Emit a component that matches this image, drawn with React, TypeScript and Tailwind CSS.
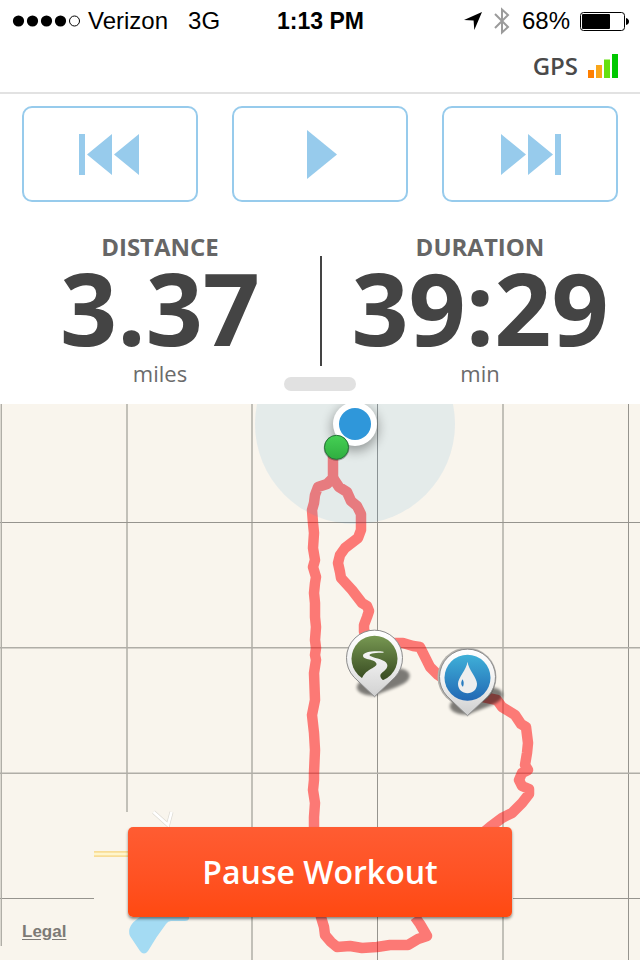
import { ReactNode, useState } from "react";

const SANS = "font-['Open_Sans','Noto_Sans',sans-serif]";
const SYSTEM = "font-['Liberation_Sans',Arial,sans-serif]";

const OUTBOUND =
  "M333 456 L333 468 L333 478 L327 484 L318 487 L315 495 L314 503 L312 510 L313 523 L314 533 L313 548 L315 560 L313 567 L316 577 L315 583 L314 593 L315 603 L315 617 L316 627 L315 640 L316 648 L315 655 L316 660 L314 673 L315 700 L312 715 L314 733 L315 750 L314 773 L314 780 L313 790 L315 803 L314 817 L314 830 L318 900 L321 917 L324 927 L325 935 L331 942 L337 947 L350 946 L362 948 L377 947 L390 945 L408 945 L418 939 L427 936 L420 924 L415 917";
const RETURN =
  "M333 478 L339 487 L347 492 L351 501 L357 506 L361 514 L361 530 L358 538 L345 548 L340 555 L338 563 L340 572 L341 578 L352 590 L362 603 L367 606 L369 611 L367 617 L364 625 L364 632 L380 643 L403 643 L413 646 L420 647 L424 655 L430 667 L438 675 L460 690 L483 697 L497 700 L502 707 L515 715 L521 724 L526 727 L528 743 L527 753 L525 765 L528 770 L522 773 L519 780 L522 786 L529 789 L529 794 L522 803 L512 813 L502 818 L490 827 L484 832";

const STATS = [
  { label: "DISTANCE", value: "3.37", unit: "miles" },
  { label: "DURATION", value: "39:29", unit: "min" },
];

function StatusBar() {
  return (
    <header className={`flex h-10 items-center pt-[2px] text-2xl text-black ${SYSTEM}`}>
      <div className="flex flex-1 items-center pl-3">
        <svg width="69" height="12" viewBox="0 0 69 12" className="mr-[7px]" aria-hidden="true">
          {[6.5, 20.5, 34.5, 48.5].map((x) => (
            <circle key={x} cx={x} cy="6" r="5.6" />
          ))}
          <circle cx="62.5" cy="6" r="5" fill="none" stroke="#000" />
        </svg>
        <span>Verizon</span>
        <span className="ml-5">3G</span>
      </div>
      <span className="text-[23px] font-bold">1:13 PM</span>
      <div className="flex flex-1 items-center justify-end pr-[11px]">
        <svg width="18" height="18" viewBox="0 0 18 18" className="mr-3" aria-hidden="true">
          <path d="M0 8 L18 0 L10.3 18 L9.6 8.6 Z" />
        </svg>
        <svg width="16" height="28" viewBox="0 0 16 28" className="mr-3" aria-hidden="true">
          <path d="M1 7 L14 20 L8 25.5 V2.5 L14 8 L1 21" fill="none" stroke="#9b9b9b" strokeWidth="2" />
        </svg>
        <span className="mr-[10px]">68%</span>
        <svg width="49" height="19" viewBox="0 0 49 19" aria-hidden="true">
          <rect x="0.5" y="0.5" width="44" height="18" rx="3" fill="none" stroke="#000" />
          <rect x="2" y="2" width="28" height="15" rx="1" />
          <path d="M46 6 Q49 7 49 9.5 Q49 12 46 13 Z" />
        </svg>
      </div>
    </header>
  );
}

function GpsBar() {
  return (
    <div className="flex h-[54px] items-center justify-end gap-[10px] border-b-2 border-[#e2e2e2] pr-[22px]">
      <span className="text-2xl font-semibold text-[#4a4a4a]">GPS</span>
      <svg width="30" height="24" viewBox="0 0 30 24" aria-hidden="true">
        <rect x="0" y="16" width="6" height="8" fill="#ff7f00" />
        <rect x="8" y="11" width="6" height="13" fill="#f9a61a" />
        <rect x="16" y="5.5" width="6" height="18.5" fill="#66e010" />
        <rect x="24" y="0" width="6" height="24" fill="#00c800" />
      </svg>
    </div>
  );
}

function MediaButton({ label, children }: { label: string; children: ReactNode }) {
  return (
    <button
      type="button"
      aria-label={label}
      className="flex h-24 items-center justify-center rounded-[10px] border-2 border-[#97cbec] bg-white text-[#97cbec]"
    >
      {children}
    </button>
  );
}

function MediaControls() {
  return (
    <div className="grid grid-cols-3 gap-[34px] px-[22px] pt-3">
      <MediaButton label="Previous">
        <svg width="62" height="42" viewBox="0 0 62 42" fill="currentColor">
          <path d="M0 1 H6 V42 H0 Z M8 21.5 L33 1 V42 Z M35 21.5 L60 1 V42 Z" />
        </svg>
      </MediaButton>
      <MediaButton label="Play">
        <svg width="34" height="50" viewBox="0 0 34 50" fill="currentColor">
          <path d="M4 1 L34 25.5 L4 50 Z" />
        </svg>
      </MediaButton>
      <MediaButton label="Next">
        <svg width="62" height="42" viewBox="0 0 62 42" fill="currentColor">
          <path d="M2 1 L27 21.5 L2 42 Z M29 1 L54 21.5 L29 42 Z M56 1 H62 V42 H56 Z" />
        </svg>
      </MediaButton>
    </div>
  );
}

function Stats() {
  return (
    <section className="relative flex h-[202px] pt-[30px]">
      {STATS.map((stat) => (
        <div key={stat.label} className="flex flex-1 flex-col items-center">
          <span className="text-2xl leading-[30px] font-bold text-[#666]">{stat.label}</span>
          <span className="text-[100px] leading-[90px] font-bold text-[#444]">{stat.value}</span>
          <span className="text-[22px] leading-[42px] text-[#6b6b6b]">{stat.unit}</span>
        </div>
      ))}
      <div className="absolute top-[54px] left-1/2 h-[110px] w-[2px] bg-[#444]" />
      <button
        type="button"
        aria-label="Resize stats"
        className="absolute bottom-[13px] left-1/2 h-[14px] w-[72px] -translate-x-1/2 rounded-full bg-[#e1e1e1]"
      />
    </section>
  );
}

function Pin({ x, y, fill, children }: { x: number; y: number; fill: string; children: ReactNode }) {
  return (
    <g transform={`translate(${x} ${y})`}>
      <path
        d="M0 37 C-12 37 -20 32 -17 26 C-12 18 14 8 27 10 C37 12 38 20 29 25 C20 30 10 32 0 37 Z"
        fill="#000"
        opacity="0.5"
        filter="url(#pinShadow)"
      />
      <path
        d="M0 38 L-20.5 18.5 A28 28 0 1 1 20.5 18.5 Z"
        fill="url(#pinBody)"
        stroke="#8b8b8b"
        strokeWidth="1"
      />
      <circle r="23" fill={fill} />
      {children}
    </g>
  );
}

function RouteMap() {
  return (
    <svg
      className="absolute inset-0 h-full w-full"
      viewBox="0 404 640 556"
      preserveAspectRatio="xMidYMin slice"
      role="img"
      aria-label="Workout route"
    >
      <defs>
        <linearGradient id="pinBody" x1="0" y1="0" x2="0" y2="1">
          <stop offset="0" stopColor="#ffffff" />
          <stop offset="0.5" stopColor="#f1f1f1" />
          <stop offset="1" stopColor="#cdcdcd" />
        </linearGradient>
        <linearGradient id="trail" x1="0" y1="0" x2="0" y2="1">
          <stop offset="0" stopColor="#779852" />
          <stop offset="1" stopColor="#35471f" />
        </linearGradient>
        <linearGradient id="path" x1="0" y1="0" x2="0" y2="1">
          <stop offset="0" stopColor="#f6f6f6" />
          <stop offset="1" stopColor="#d4d4d4" />
        </linearGradient>
        <linearGradient id="water" x1="0" y1="0" x2="0" y2="1">
          <stop offset="0" stopColor="#3fb0d8" />
          <stop offset="1" stopColor="#2268b4" />
        </linearGradient>
        <linearGradient id="start" x1="0" y1="0" x2="0" y2="1">
          <stop offset="0" stopColor="#45d054" />
          <stop offset="1" stopColor="#2fae40" />
        </linearGradient>
        <filter id="pinShadow" x="-20%" y="-20%" width="140%" height="140%">
          <feGaussianBlur stdDeviation="1.6" />
        </filter>
        <filter id="dotShadow" x="-50%" y="-50%" width="200%" height="200%">
          <feGaussianBlur stdDeviation="6" />
        </filter>
      </defs>
      <rect y="404" width="640" height="556" fill="#f9f5ed" />

      {/* street grid */}
      <g stroke="#c2c0b8" strokeWidth="2">
        <path d="M127 404 V812 M252 404 V960 M503 404 V960" />
      </g>
      <g stroke="#96948e" strokeWidth="1">
        <path d="M377.5 404 V960 M628.5 404 V960 M0 522.5 H640 M0 898.5 H94 M513 898.5 H640" />
      </g>
      <g stroke="#b0aea7" strokeWidth="1.4">
        <path d="M1.3 404 V946 M0 647.7 H640 M0 773.2 H640" />
      </g>

      {/* side roads and pond */}
      <path d="M94 854 H140" stroke="#f8dc96" strokeWidth="6" />
      <path d="M94 854 H140" stroke="#fff5cc" strokeWidth="2.4" />
      <path d="M153.5 812 L168 825 L171.5 812" fill="none" stroke="#dedbd4" strokeWidth="4" />
      <path d="M153.5 812 L168 825 L171.5 812" fill="none" stroke="#fff" strokeWidth="2.6" />
      <path
        d="M140 915 H189 V919 Q188 921 185 921 H171 Q168 921 166 924 Q156 937 148 951 Q144 956 140 951 L130 936 Q126 926 140 917 Z"
        fill="#a4dbf3"
      />

      <g fill="none" stroke="#ff0000" strokeWidth="10.5" strokeLinejoin="round" opacity="0.5">
        <path d={OUTBOUND} />
        <path d={RETURN} />
      </g>

      {/* current position */}
      <circle cx="355" cy="424" r="100" fill="#2e96d7" opacity="0.1" />
      <circle cx="355" cy="428" r="23" fill="#000" opacity="0.35" filter="url(#dotShadow)" />
      <circle cx="355" cy="424" r="22" fill="#fff" />
      <circle cx="355" cy="424" r="16" fill="#2f97da" />
      <circle cx="336.5" cy="448" r="12.8" fill="#000" opacity="0.3" />
      <circle cx="336.5" cy="447.3" r="12" fill="url(#start)" stroke="#27763a" strokeWidth="1" />

      <Pin x={374.5} y={658.7} fill="url(#trail)">
        <path
          d="M9 -7 C0 -8 -11.5 -7 -11.5 -3 C-11.5 1.5 1 0 2 5 C2.5 9 -8 10 -12 18.5 L-14 21 L0 35 L12 22 L8.5 21.5 C5 18 5 16 8 13.5 C13 10 15 6 10 2.5 C5 -0.5 -4 -1.5 -5 -3.5 C-5 -5.5 2 -6 9 -6 Z"
          fill="url(#path)"
        />
      </Pin>
      <circle cx="467" cy="677" r="29.5" fill="#b5b3ae" />
      <Pin x={467.5} y={677.7} fill="url(#water)">
        <path d="M0 -16 C1 -8 9.5 0 9.5 6 C9.5 12 5 15.5 0 15.5 C-5 15.5 -9.5 12 -9.5 6 C-9.5 0 -1 -8 0 -16 Z" fill="#eeeeee" />
        <path d="M-5 1.5 C-7 5 -6.5 7.5 -4.5 9 C-3.5 6 -3.5 4 -5 1.5 Z" fill="#2a7cc0" />
      </Pin>
    </svg>
  );
}

export default function App() {
  const [paused, setPaused] = useState(false);

  return (
    <div className={`flex min-h-screen flex-col bg-white ${SANS}`}>
      <StatusBar />
      <GpsBar />
      <MediaControls />
      <Stats />
      <main className="relative flex min-h-[400px] flex-1 flex-col items-center justify-end overflow-hidden pb-[43px]">
        <RouteMap />
        <button
          type="button"
          onClick={() => setPaused(!paused)}
          className="relative h-[90px] w-3/5 rounded-[5px] bg-linear-to-b from-[#ff5c32] to-[#ff4910] text-[32px] font-semibold text-white shadow-[0_2px_3px_rgba(0,0,0,0.45)]"
        >
          {paused ? "Resume Workout" : "Pause Workout"}
        </button>
        <a
          href="#legal"
          className={`absolute bottom-4 left-[22px] text-[17px] font-bold text-[#7c7a76] underline underline-offset-2 ${SYSTEM}`}
        >
          Legal
        </a>
      </main>
    </div>
  );
}
